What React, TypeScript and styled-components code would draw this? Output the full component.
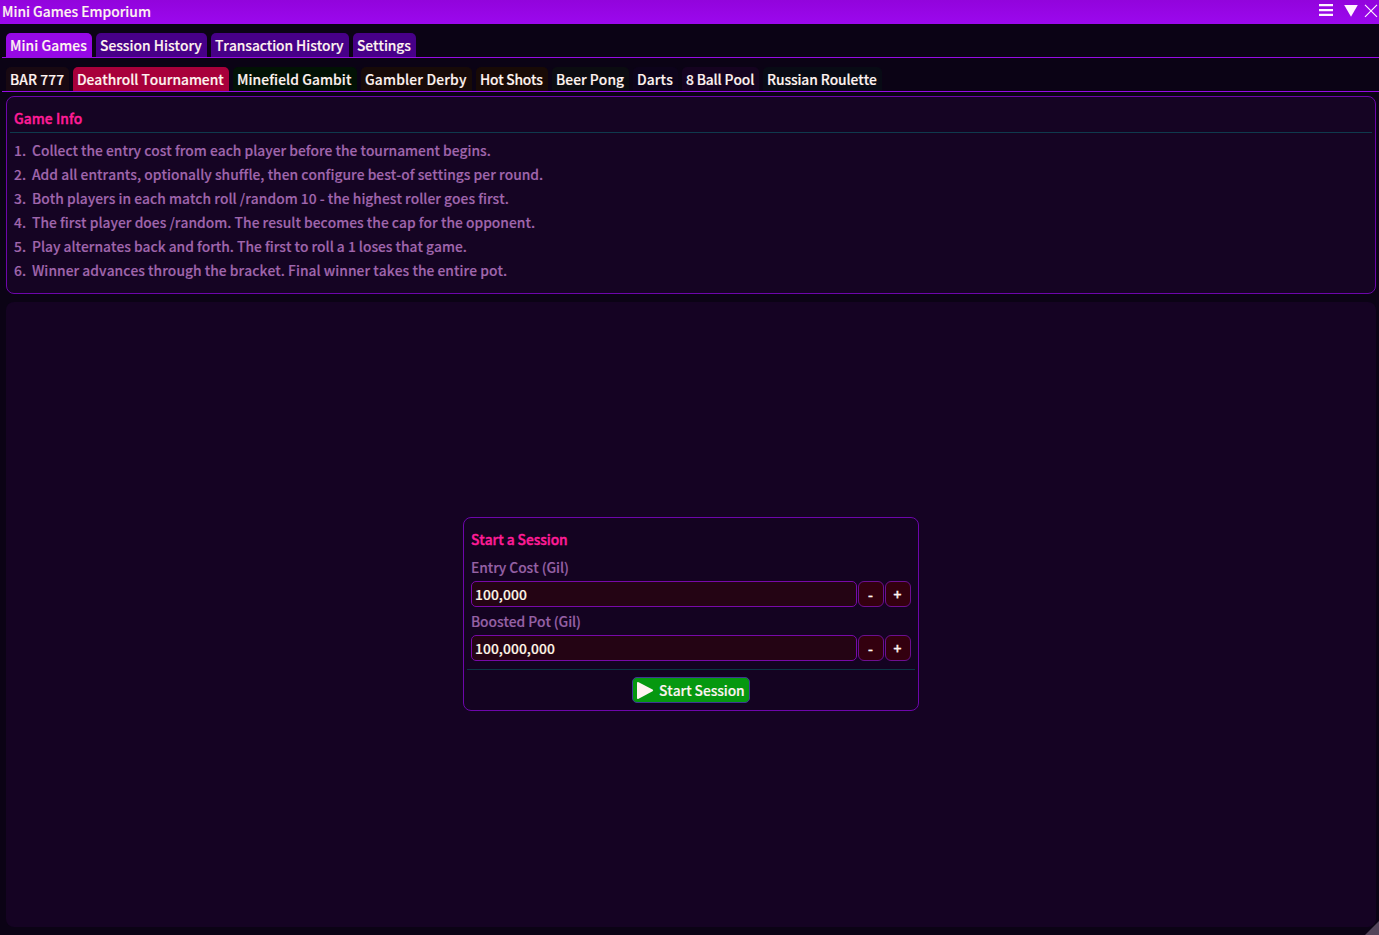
import React, { useState } from "react";
import styled, { createGlobalStyle } from "styled-components";

const GlobalStyle = createGlobalStyle`
  *, *::before, *::after { box-sizing: border-box; }
  body {
    margin: 0;
    background: #0b0315;
    overflow: hidden;
  }
`;

const Window = styled.div`
  position: relative;
  display: flex;
  flex-direction: column;
  width: 100%;
  height: 100vh;
  background: #0b0315;
  color: #fff3f0;
  font: 500 13.81px/20px "Noto Sans CJK JP", "Noto Sans", sans-serif;
  font-kerning: none;
  font-variant-ligatures: none;
  white-space: pre;
  -webkit-text-stroke: 0.16px currentColor;
`;

const Label = styled.span<{ $spacing?: number }>`
  letter-spacing: ${(p) => p.$spacing ?? 0}px;
`;

const TitleBar = styled.header`
  display: flex;
  justify-content: space-between;
  height: 24px;
  flex: none;
  padding: 1px 0 0 2px;
  background: linear-gradient(#9204dc, #9c08ee);
`;

const WindowControls = styled.div`
  display: flex;
  margin-top: -1px;
`;

const TabBar = styled.nav<{ $top: number }>`
  display: flex;
  flex: none;
  gap: 4px;
  margin: ${(p) => p.$top}px 0 0 2px;
  padding-left: 4px;
  border-bottom: 1px solid #970ce4;
`;

const Tab = styled.button<{ $width: number; $fill: string }>`
  width: ${(p) => p.$width}px;
  height: 24px;
  padding: 2px 0 2px 4px;
  border: 0;
  border-radius: 5px 5px 0 0;
  background: ${(p) => p.$fill};
  color: inherit;
  font: inherit;
  text-align: left;
  white-space: pre;
`;

const InfoPanel = styled.section`
  flex: none;
  height: 198px;
  margin: 4px 3px 0 6px;
  border: 1px solid #6d06ab;
  border-radius: 8px;
  background: #150423;
`;

const Heading = styled.h2`
  margin: 0;
  color: #ff1c97;
  font: inherit;
  -webkit-text-stroke-width: 0.4px;
`;

const InfoHeading = styled(Heading)`
  margin: 0 3px;
  padding: 11px 4px 4px;
  border-bottom: 1px solid #0f3a4d;
`;

const Steps = styled.ol`
  display: flex;
  flex-direction: column;
  gap: 4px;
  margin: 7px 0 0;
  padding: 0 0 0 7px;
  list-style: none;
  color: #a066ad;
`;

const Step = styled.li`
  display: grid;
  grid-template-columns: 18px auto;
`;

const Stage = styled.main`
  display: flex;
  flex: none;
  align-items: center;
  justify-content: center;
  height: 625px;
  margin: 8px 3px 0 6px;
  padding-bottom: 2px;
  border-radius: 8px;
  background: #150323;
`;

const SessionCard = styled.form`
  width: 456px;
  height: 194px;
  padding: 11px 3px 0;
  border: 1px solid #6d06ab;
  border-radius: 8px;
  background: #140321;
`;

const Field = styled.div<{ $top: number }>`
  margin: ${(p) => p.$top}px 4px 0;
`;

const FieldLabel = styled.div`
  margin-bottom: 4px;
  color: #9661a5;
`;

const FieldRow = styled.div`
  display: grid;
  grid-template-columns: 386px 26px 26px;
  gap: 1px;
  height: 26px;
`;

const ValueBox = styled.div`
  padding: 2px 3px;
  border: 1px solid #7809a8;
  border-radius: 5px;
  background: #240414;
  color: #fff5e8;
`;

const StepButton = styled.button`
  padding: 1px 1px 0 0;
  border: 1px solid #6d0f90;
  border-radius: 6px;
  background: #33000f;
  color: inherit;
  font: inherit;
  text-align: center;
  -webkit-text-stroke-width: 0.4px;
`;

const CardFooter = styled.div`
  display: flex;
  justify-content: center;
  margin-top: 8px;
  padding-top: 7px;
  border-top: 1px solid #0b3644;
`;

const StartButton = styled.button`
  display: flex;
  gap: 5px;
  width: 118px;
  height: 26px;
  padding: 2px 0 0 4px;
  border: 1px solid #3d3793;
  border-radius: 5px;
  background: #069810;
  color: inherit;
  font: inherit;
  white-space: pre;
`;

const PlayIcon = styled.svg`
  margin-top: 1px;
`;

const ResizeGrip = styled.svg`
  position: absolute;
  right: 0;
  bottom: 0;
`;

type TabSpec = { name: string; width: number; spacing: number; fill: string };

const sections: TabSpec[] = [
  { name: "Mini Games", width: 86, spacing: 0.07, fill: "#9609e5" },
  { name: "Session History", width: 111, spacing: 0.01, fill: "#470088" },
  { name: "Transaction History", width: 138, spacing: -0.07, fill: "#470088" },
  { name: "Settings", width: 63, spacing: -0.06, fill: "#470088" },
];

const games: TabSpec[] = [
  { name: "BAR 777", width: 63, spacing: 0.08, fill: "#180912" },
  { name: "Deathroll Tournament", width: 156, spacing: -0.04, fill: "#a8003b" },
  { name: "Minefield Gambit", width: 124, spacing: 0.09, fill: "#021205" },
  { name: "Gambler Derby", width: 111, spacing: 0.18, fill: "#170a08" },
  { name: "Hot Shots", width: 72, spacing: -0.23, fill: "#180a06" },
  { name: "Beer Pong", width: 77, spacing: 0.06, fill: "#0b0c11" },
  { name: "Darts", width: 45, spacing: 0.12, fill: "#0d031b" },
  { name: "8 Ball Pool", width: 77, spacing: -0.12, fill: "#150320" },
  { name: "Russian Roulette", width: 119, spacing: -0.09, fill: "#080b15" },
];

const steps: [string, number][] = [
  ["Collect the entry cost from each player before the tournament begins.", -0.004],
  ["Add all entrants, optionally shuffle, then configure best-of settings per round.", 0.027],
  ["Both players in each match roll /random 10 - the highest roller goes first.", 0.02],
  ["The first player does /random. The result becomes the cap for the opponent.", 0.02],
  ["Play alternates back and forth. The first to roll a 1 loses that game.", -0.01],
  ["Winner advances through the bracket. Final winner takes the entire pot.", 0.04],
];

function Tabs({ items, top }: { items: TabSpec[]; top: number }) {
  return (
    <TabBar $top={top}>
      {items.map((t) => (
        <Tab key={t.name} $width={t.width} $fill={t.fill}>
          <Label $spacing={t.spacing}>{t.name}</Label>
        </Tab>
      ))}
    </TabBar>
  );
}

function GilField({ label, spacing, initial, increment, top }: {
  label: string; spacing: number; initial: number; increment: number; top: number;
}) {
  const [value, setValue] = useState(initial);
  return (
    <Field $top={top}>
      <FieldLabel><Label $spacing={spacing}>{label}</Label></FieldLabel>
      <FieldRow>
        <ValueBox><Label $spacing={0.08}>{value.toLocaleString("en-US")}</Label></ValueBox>
        <StepButton type="button" onClick={() => setValue(Math.max(0, value - increment))}>-</StepButton>
        <StepButton type="button" onClick={() => setValue(value + increment)}>+</StepButton>
      </FieldRow>
    </Field>
  );
}

export default function App() {
  return (
    <>
      <GlobalStyle />
      <Window>
        <TitleBar>
          <Label>Mini Games Emporium</Label>
          <WindowControls>
            <svg width="62" height="24" viewBox="0 0 62 24" fill="#fff3ff">
              <path d="M2 4h14v2.2H2zM2 9h14v2.3H2zM2 13.8h14v2.2H2z" />
              <path d="M27.2 5h13.6L34 16.8z" />
              <path d="M48 4.8l12 12M60 4.8l-12 12" stroke="#fff3ff" strokeWidth="1.2" />
            </svg>
          </WindowControls>
        </TitleBar>
        <Tabs items={sections} top={9} />
        <Tabs items={games} top={9} />
        <InfoPanel>
          <InfoHeading><Label $spacing={0.08}>Game Info</Label></InfoHeading>
          <Steps>
            {steps.map(([text, spacing], i) => (
              <Step key={text}>
                <span>{i + 1}.</span>
                <Label $spacing={spacing}>{text}</Label>
              </Step>
            ))}
          </Steps>
        </InfoPanel>
        <Stage>
          <SessionCard onSubmit={(e) => e.preventDefault()}>
            <Field as={Heading} $top={0}><Label $spacing={-0.06}>Start a Session</Label></Field>
            <GilField label="Entry Cost (Gil)" spacing={-0.05} initial={100000} increment={10000} top={8} />
            <GilField label="Boosted Pot (Gil)" spacing={-0.09} initial={100000000} increment={1000000} top={4} />
            <CardFooter>
              <StartButton type="submit">
                <PlayIcon width="17" height="20" viewBox="0 0 17 20" fill="#fff3f0">
                  <path d="M0 2.2Q0 .4 1.6 1.2L15.6 8.6Q16.8 9.4 15.6 10.2L1.6 17.8Q0 18.6 0 17z" />
                </PlayIcon>
                <Label $spacing={-0.07}>Start Session</Label>
              </StartButton>
            </CardFooter>
          </SessionCard>
        </Stage>
        <ResizeGrip width="14" height="14" viewBox="0 0 14 14">
          <path d="M14 0v14H0z" fill="#53455a" />
        </ResizeGrip>
      </Window>
    </>
  );
}
